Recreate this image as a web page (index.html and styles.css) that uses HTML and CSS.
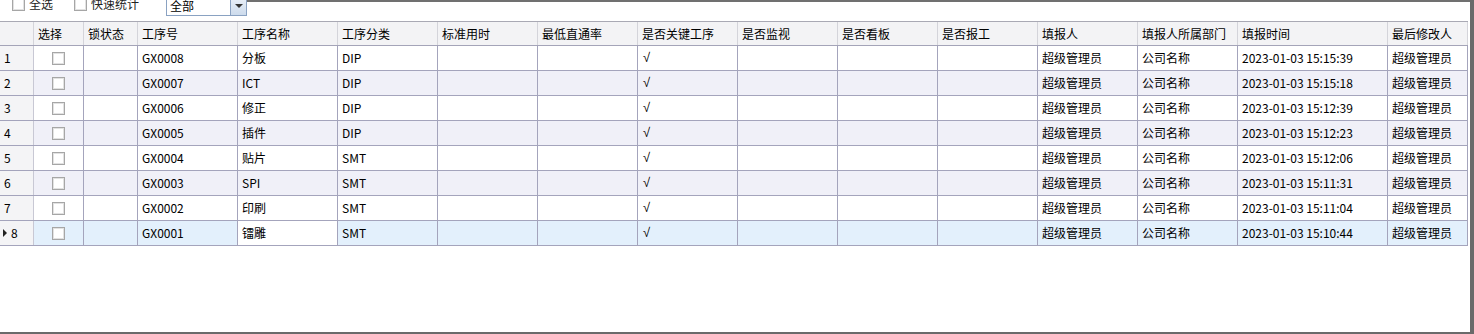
FILE: index.html
```html
<!DOCTYPE html>
<html lang="zh-CN">
<head>
<meta charset="utf-8">
<title>工序列表</title>
<link rel="stylesheet" href="styles.css">
</head>
<body>
<div class="window">
  <div class="topstrip"></div>
  <div class="toolbar">
    <label class="tb-item"><span class="chk"></span><span>全选</span></label>
    <label class="tb-item tb-item2"><span class="chk"></span><span>快速统计</span></label>
    <div class="combo"><span class="combo-text">全部</span><span class="combo-btn"><span class="tri"></span></span></div>
  </div>
  <div class="grid">
    <div class="row head">
      <div class="cell c-rh"></div>
      <div class="cell c-sel">选择</div>
      <div class="cell c-lock">锁状态</div>
      <div class="cell c-w">工序号</div>
      <div class="cell c-w">工序名称</div>
      <div class="cell c-w">工序分类</div>
      <div class="cell c-w">标准用时</div>
      <div class="cell c-w">最低直通率</div>
      <div class="cell c-w">是否关键工序</div>
      <div class="cell c-w">是否监视</div>
      <div class="cell c-w">是否看板</div>
      <div class="cell c-w">是否报工</div>
      <div class="cell c-w">填报人</div>
      <div class="cell c-w">填报人所属部门</div>
      <div class="cell c-time">填报时间</div>
      <div class="cell c-last">最后修改人</div>
    </div>
    <div class="row">
      <div class="cell c-rh">1</div><div class="cell c-sel"><span class="chk"></span></div><div class="cell c-lock"></div>
      <div class="cell c-w">GX0008</div><div class="cell c-w">分板</div><div class="cell c-w">DIP</div>
      <div class="cell c-w"></div><div class="cell c-w"></div><div class="cell c-w"><span class="tick">√</span></div>
      <div class="cell c-w"></div><div class="cell c-w"></div><div class="cell c-w"></div>
      <div class="cell c-w">超级管理员</div><div class="cell c-w">公司名称</div>
      <div class="cell c-time">2023-01-03 15:15:39</div><div class="cell c-last">超级管理员</div>
    </div>
    <div class="row alt">
      <div class="cell c-rh">2</div><div class="cell c-sel"><span class="chk"></span></div><div class="cell c-lock"></div>
      <div class="cell c-w">GX0007</div><div class="cell c-w">ICT</div><div class="cell c-w">DIP</div>
      <div class="cell c-w"></div><div class="cell c-w"></div><div class="cell c-w"><span class="tick">√</span></div>
      <div class="cell c-w"></div><div class="cell c-w"></div><div class="cell c-w"></div>
      <div class="cell c-w">超级管理员</div><div class="cell c-w">公司名称</div>
      <div class="cell c-time">2023-01-03 15:15:18</div><div class="cell c-last">超级管理员</div>
    </div>
    <div class="row">
      <div class="cell c-rh">3</div><div class="cell c-sel"><span class="chk"></span></div><div class="cell c-lock"></div>
      <div class="cell c-w">GX0006</div><div class="cell c-w">修正</div><div class="cell c-w">DIP</div>
      <div class="cell c-w"></div><div class="cell c-w"></div><div class="cell c-w"><span class="tick">√</span></div>
      <div class="cell c-w"></div><div class="cell c-w"></div><div class="cell c-w"></div>
      <div class="cell c-w">超级管理员</div><div class="cell c-w">公司名称</div>
      <div class="cell c-time">2023-01-03 15:12:39</div><div class="cell c-last">超级管理员</div>
    </div>
    <div class="row alt">
      <div class="cell c-rh">4</div><div class="cell c-sel"><span class="chk"></span></div><div class="cell c-lock"></div>
      <div class="cell c-w">GX0005</div><div class="cell c-w">插件</div><div class="cell c-w">DIP</div>
      <div class="cell c-w"></div><div class="cell c-w"></div><div class="cell c-w"><span class="tick">√</span></div>
      <div class="cell c-w"></div><div class="cell c-w"></div><div class="cell c-w"></div>
      <div class="cell c-w">超级管理员</div><div class="cell c-w">公司名称</div>
      <div class="cell c-time">2023-01-03 15:12:23</div><div class="cell c-last">超级管理员</div>
    </div>
    <div class="row">
      <div class="cell c-rh">5</div><div class="cell c-sel"><span class="chk"></span></div><div class="cell c-lock"></div>
      <div class="cell c-w">GX0004</div><div class="cell c-w">贴片</div><div class="cell c-w">SMT</div>
      <div class="cell c-w"></div><div class="cell c-w"></div><div class="cell c-w"><span class="tick">√</span></div>
      <div class="cell c-w"></div><div class="cell c-w"></div><div class="cell c-w"></div>
      <div class="cell c-w">超级管理员</div><div class="cell c-w">公司名称</div>
      <div class="cell c-time">2023-01-03 15:12:06</div><div class="cell c-last">超级管理员</div>
    </div>
    <div class="row alt">
      <div class="cell c-rh">6</div><div class="cell c-sel"><span class="chk"></span></div><div class="cell c-lock"></div>
      <div class="cell c-w">GX0003</div><div class="cell c-w">SPI</div><div class="cell c-w">SMT</div>
      <div class="cell c-w"></div><div class="cell c-w"></div><div class="cell c-w"><span class="tick">√</span></div>
      <div class="cell c-w"></div><div class="cell c-w"></div><div class="cell c-w"></div>
      <div class="cell c-w">超级管理员</div><div class="cell c-w">公司名称</div>
      <div class="cell c-time">2023-01-03 15:11:31</div><div class="cell c-last">超级管理员</div>
    </div>
    <div class="row">
      <div class="cell c-rh">7</div><div class="cell c-sel"><span class="chk"></span></div><div class="cell c-lock"></div>
      <div class="cell c-w">GX0002</div><div class="cell c-w">印刷</div><div class="cell c-w">SMT</div>
      <div class="cell c-w"></div><div class="cell c-w"></div><div class="cell c-w"><span class="tick">√</span></div>
      <div class="cell c-w"></div><div class="cell c-w"></div><div class="cell c-w"></div>
      <div class="cell c-w">超级管理员</div><div class="cell c-w">公司名称</div>
      <div class="cell c-time">2023-01-03 15:11:04</div><div class="cell c-last">超级管理员</div>
    </div>
    <div class="row selected">
      <div class="cell c-rh"><span class="cur"></span>8</div><div class="cell c-sel"><span class="chk"></span></div><div class="cell c-lock"></div>
      <div class="cell c-w">GX0001</div><div class="cell c-w current">镭雕</div><div class="cell c-w">SMT</div>
      <div class="cell c-w"></div><div class="cell c-w"></div><div class="cell c-w"><span class="tick">√</span></div>
      <div class="cell c-w"></div><div class="cell c-w"></div><div class="cell c-w"></div>
      <div class="cell c-w">超级管理员</div><div class="cell c-w">公司名称</div>
      <div class="cell c-time">2023-01-03 15:10:44</div><div class="cell c-last">超级管理员</div>
    </div>
  </div>
</div>
</body>
</html>
```
FILE: styles.css
```css
* { box-sizing: border-box; }
html, body { margin: 0; padding: 0; }
body {
  width: 1474px;
  height: 334px;
  overflow: hidden;
  background: #6a6a6a;
  font-family: "Noto Sans CJK SC", "Noto Sans", sans-serif;
  font-size: 12px;
  color: #000;
}
.window {
  position: relative;
  width: 1470px;
  height: 332px;
  background: #fff;
  overflow: hidden;
}
.topstrip {
  position: absolute;
  left: 247px;
  right: 0;
  top: 0;
  height: 2px;
  background: #707070;
}
.toolbar {
  display: flex;
  align-items: flex-start;
  height: 21px;
  padding-left: 12px;
}
.tb-item {
  display: flex;
  align-items: center;
  gap: 4px;
  height: 14px;
  margin-top: -3px;
  line-height: 14px;
  color: #222;
}
.tb-item2 { margin-left: 21px; }
.chk {
  display: inline-block;
  width: 13px;
  height: 13px;
  border: 1px solid #a6a6a6;
  background: #fff;
  box-shadow: inset 0 0 0 1px #e2e2e2;
  flex: none;
}
.combo {
  display: flex;
  width: 81px;
  height: 20px;
  margin-top: -4px;
  margin-left: 27px;
  border: 1px solid #8aa2c2;
  background: #fff;
}
.combo-text {
  flex: 1;
  padding-left: 3px;
  line-height: 18px;
}
.combo-btn {
  width: 16px;
  display: flex;
  align-items: center;
  justify-content: center;
  border-left: 1px solid #8aa2c2;
  background: linear-gradient(#eaf0f8, #cddbec);
}
.tri {
  width: 0;
  height: 0;
  border-left: 4px solid transparent;
  border-right: 4px solid transparent;
  border-top: 4px solid #333;
}
.grid {
  width: 1468px;
  border-top: 1px solid #a9a9b4;
}
.row {
  display: flex;
  height: 25px;
  border-bottom: 1px solid #a4a4bc;
  background: #fff;
}
.row.head {
  height: 24px;
  background: #f3f3f5;
  border-bottom: 1px solid #a4a4b8;
}
.row.alt { background: #f0f0f8; }
.row.selected { background: #e3f0fc; }
.cell {
  display: flex;
  align-items: center;
  padding-left: 4px;
  border-right: 1px solid #a4a4bc;
  white-space: nowrap;
  overflow: hidden;
  line-height: 14px;
}
.head .cell { border-right-color: #d4d4da; }
.cell.current { background: #fff; }
.c-rh {
  width: 34px;
  background: #f4f4f6;
  border-right-color: #c8c8d4;
}
.head .c-rh { background: #f3f3f5; }
.c-sel { width: 50px; justify-content: center; padding-left: 0; }
.head .c-sel { justify-content: flex-start; padding-left: 4px; }
.c-lock { width: 54px; }
.c-w { width: 100px; }
.c-time { width: 150px; }
.c-last { width: 80px; }
.tick {
  font-family: "Liberation Sans", "DejaVu Sans", sans-serif;
  font-size: 13px;
  padding-left: 1px;
}
.cur {
  width: 0;
  height: 0;
  border-top: 4px solid transparent;
  border-bottom: 4px solid transparent;
  border-left: 4px solid #222;
  margin-left: -1px;
  margin-right: 4px;
}
```
